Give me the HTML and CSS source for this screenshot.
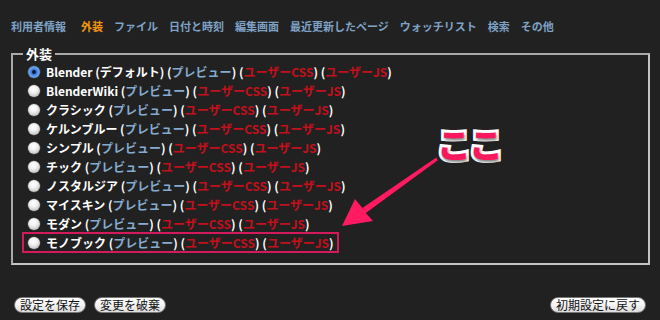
FILE: index.html
```html
<!DOCTYPE html>
<html lang="ja">
<head>
<meta charset="utf-8">
<link rel="stylesheet" href="styles.css">
</head>
<body>
<div class="page">
  <nav class="tabs">
    <span class="tab first">利用者情報</span>
    <span class="tab active">外装</span>
    <span class="tab">ファイル</span>
    <span class="tab">日付と時刻</span>
    <span class="tab">編集画面</span>
    <span class="tab">最近更新したページ</span>
    <span class="tab">ウォッチリスト</span>
    <span class="tab">検索</span>
    <span class="tab">その他</span>
  </nav>

  <fieldset class="skins">
    <legend>外装</legend>
    <div class="row"><span class="radio on"></span><span class="label">Blender (デフォルト) (<a class="pv">プレビュー</a>) (<a class="us">ユーザーCSS</a>) (<a class="us">ユーザーJS</a>)</span></div>
    <div class="row"><span class="radio"></span><span class="label">BlenderWiki (<a class="pv">プレビュー</a>) (<a class="us">ユーザーCSS</a>) (<a class="us">ユーザーJS</a>)</span></div>
    <div class="row"><span class="radio"></span><span class="label">クラシック (<a class="pv">プレビュー</a>) (<a class="us">ユーザーCSS</a>) (<a class="us">ユーザーJS</a>)</span></div>
    <div class="row"><span class="radio"></span><span class="label">ケルンブルー (<a class="pv">プレビュー</a>) (<a class="us">ユーザーCSS</a>) (<a class="us">ユーザーJS</a>)</span></div>
    <div class="row"><span class="radio"></span><span class="label">シンプル (<a class="pv">プレビュー</a>) (<a class="us">ユーザーCSS</a>) (<a class="us">ユーザーJS</a>)</span></div>
    <div class="row"><span class="radio"></span><span class="label">チック (<a class="pv">プレビュー</a>) (<a class="us">ユーザーCSS</a>) (<a class="us">ユーザーJS</a>)</span></div>
    <div class="row"><span class="radio"></span><span class="label">ノスタルジア (<a class="pv">プレビュー</a>) (<a class="us">ユーザーCSS</a>) (<a class="us">ユーザーJS</a>)</span></div>
    <div class="row"><span class="radio"></span><span class="label">マイスキン (<a class="pv">プレビュー</a>) (<a class="us">ユーザーCSS</a>) (<a class="us">ユーザーJS</a>)</span></div>
    <div class="row"><span class="radio"></span><span class="label">モダン (<a class="pv">プレビュー</a>) (<a class="us">ユーザーCSS</a>) (<a class="us">ユーザーJS</a>)</span></div>
    <div class="row marked"><span class="radio"></span><span class="label">モノブック (<a class="pv">プレビュー</a>) (<a class="us">ユーザーCSS</a>) (<a class="us">ユーザーJS</a>)</span></div>
  </fieldset>

  <div class="buttons">
    <div class="group">
      <button class="btn">設定を保存</button>
      <button class="btn">変更を破棄</button>
    </div>
    <button class="btn">初期設定に戻す</button>
  </div>

  <div class="callout">ここ</div>
  <svg class="arrow" width="660" height="320" viewBox="0 0 660 320">
    <polygon points="342,226 355,199 362.4,208 436.3,157.6 437.8,160.2 365.8,212.9 373,221" fill="#ff1a62"/>
  </svg>
</div>
</body>
</html>
```

FILE: styles.css
```css
html, body {
  margin: 0;
  padding: 0;
  background: #212121;
}
body {
  width: 660px;
  height: 320px;
  overflow: hidden;
  font-family: "Noto Sans CJK JP", "Noto Sans", sans-serif;
  color: #fff;
}
.page {
  position: relative;
  width: 660px;
  height: 320px;
}
.tabs {
  display: flex;
  gap: 11px;
  padding: 18px 0 0 11px;
  font-size: 11px;
  font-weight: bold;
  line-height: 16px;
  color: #7fa3c6;
}
.tab.first { margin-right: 4px; }
.tab.active { color: #f39512; }

.skins {
  margin: 12px 0 0 11px;
  width: 615px;
  padding: 0 10px 11px 10px;
  border: 2px solid #a9a9a9;
  border-right-color: #c4c4c4;
  border-bottom-color: #c4c4c4;
}
.skins legend {
  padding: 0 3px;
  font-size: 13px;
  font-weight: bold;
  line-height: 16px;
  color: #fff;
}
.row {
  display: flex;
  align-items: center;
  height: 19px;
  font-size: 12px;
  font-weight: bold;
  white-space: nowrap;
  width: fit-content;
}
.row.marked {
  outline: 2px solid #d21a5c;
  outline-offset: -1px;
  padding-right: 4px;
}
.radio {
  width: 12px;
  height: 12px;
  border-radius: 50%;
  margin: 0 6px 0 5px;
  background: radial-gradient(circle at 45% 35%, #ffffff 0%, #f2f2f2 35%, #c4c4c4 75%, #9a9a9a 100%);
  box-shadow: 0 0 0 0.5px #555;
}
.radio.on {
  background: radial-gradient(circle at 50% 50%, #0c1f3c 0%, #0c1f3c 18%, #3a7ad8 28%, #6aa7ee 60%, #2b62b8 100%);
}
.label a { text-decoration: none; }
.pv { color: #86abd0; }
.us { color: #c4101c; }

.buttons {
  display: flex;
  justify-content: space-between;
  align-items: center;
  margin: 32px 14px 0 14px;
}
.group {
  display: flex;
  gap: 8px;
}
.btn {
  font-family: "Noto Sans CJK JP", sans-serif;
  font-size: 12px;
  line-height: 14px;
  height: 16px;
  padding: 0 5px;
  color: #111;
  border: 1px solid #777;
  border-radius: 8px;
  background: linear-gradient(#ffffff, #f4f4f4 50%, #dcdcdc);
}
.callout {
  position: absolute;
  left: 437px;
  top: 123px;
  font-size: 34px;
  font-weight: 900;
  line-height: 42px;
  letter-spacing: -2px;
  color: #f8185e;
  -webkit-text-stroke: 6px #ffffff;
  paint-order: stroke fill;
  text-shadow: 1px 2px 3px rgba(0,0,0,0.5);
}
.arrow {
  position: absolute;
  left: 0;
  top: 0;
  pointer-events: none;
}
```
